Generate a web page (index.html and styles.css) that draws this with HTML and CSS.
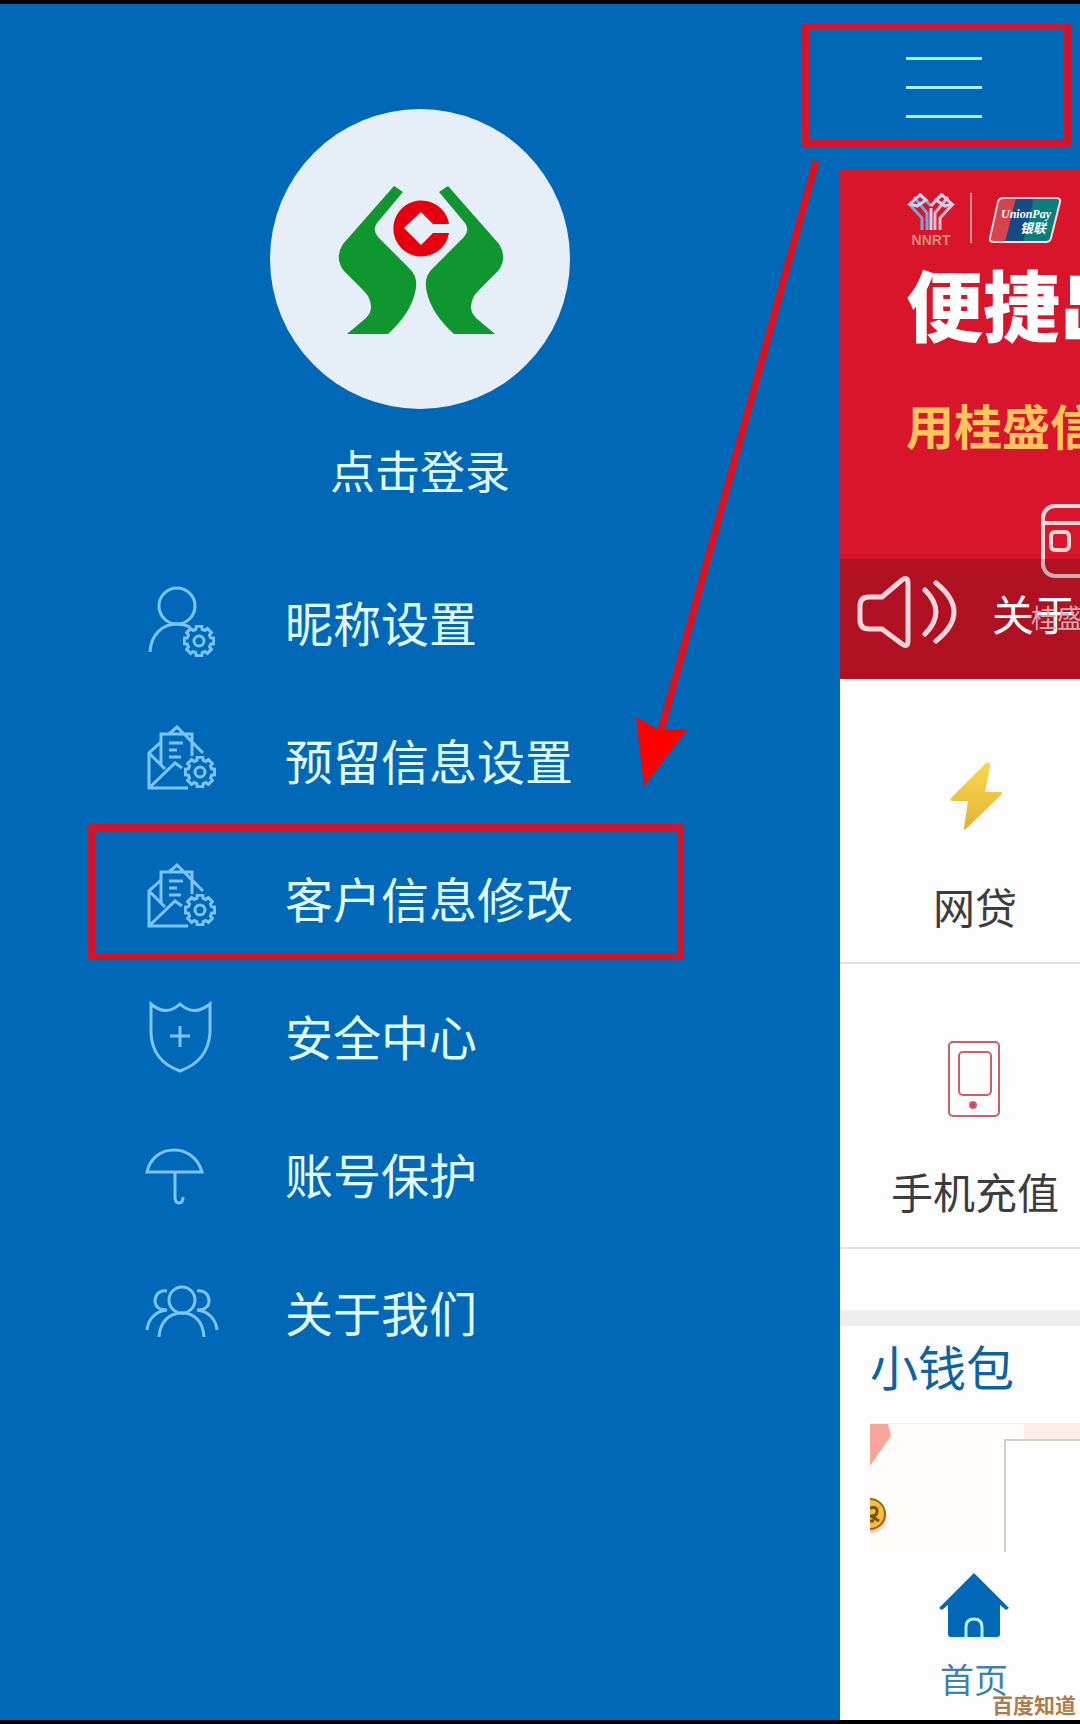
FILE: index.html
```html
<!DOCTYPE html>
<html lang="zh-CN">
<head>
    <meta charset="UTF-8">
    <meta name="viewport" content="width=device-width, initial-scale=1.0">
    <title>手机银行</title>
    <link rel="stylesheet" href="styles.css">
</head>
<body>

    <!-- Shared icon shapes -->
    <svg class="sprite" aria-hidden="true">
        <symbol id="gear" viewBox="-16 -16 32 32">
            <path d="M11.6-3.2 14.7-2.8V2.8L11.6 3.2 10.5 5.9 12.4 8.4 8.4 12.4 5.9 10.5 3.2 11.6 2.8 14.7H-2.8L-3.2 11.6-5.9 10.5-8.4 12.4-12.4 8.4-10.5 5.9-11.6 3.2-14.7 2.8V-2.8L-11.6-3.2-10.5-5.9-12.4-8.4-8.4-12.4-5.9-10.5-3.2-11.6-2.8-14.7H2.8L3.2-11.6 5.9-10.5 8.4-12.4 12.4-8.4 10.5-5.9Z"/>
            <circle r="5"/>
        </symbol>
        <symbol id="letter" viewBox="0 0 80 80">
            <path d="M21 18 9 29V64H48M9 29 25 45M9 64 35 39 42 44M21 42V10H52V32M29 10 37 3 63 29M29 19H43M29 26H37M29 33H41"/>
            <use href="#gear" x="44" y="32" width="32" height="32"/>
        </symbol>
    </svg>

    <div class="screen">
        <!-- Left side - Drawer menu -->
        <aside class="drawer">
            <button class="login">
                <svg class="avatar" viewBox="0 0 300 300">
                    <g fill="#10962e">
                        <path id="hand" d="M124 77 133 83 107 114Q102 121 108 128L140 160Q149 169 145 184 140 205 118 225H77L96 209Q105 200 98 187 96 184 91 179L74 162Q64 149 73 135Z"/>
                        <use href="#hand" transform="translate(302 0) scale(-1 1)"/>
                    </g>
                    <path fill="#e6000f" d="M179 115A28 28 0 1 0 179 124H163L151 136 134 119 151 103 163 115Z"/>
                </svg>
                <span>点击登录</span>
            </button>

            <nav class="menu">
                <a href="#nickname">
                    <svg viewBox="0 0 80 80">
                        <circle cx="37" cy="20" r="18"/>
                        <path d="M10 66C11 49 22 38 37 38Q44 38 50 41"/>
                        <use href="#gear" x="43" y="39" width="32" height="32"/>
                    </svg>
                    昵称设置
                </a>
                <a href="#reserved">
                    <svg viewBox="0 0 80 80"><use href="#letter"/></svg>
                    预留信息设置
                </a>
                <a href="#customer" class="marked">
                    <svg viewBox="0 0 80 80"><use href="#letter"/></svg>
                    客户信息修改
                </a>
                <a href="#security">
                    <svg viewBox="0 0 80 80">
                        <path d="M11 4Q26 17 40 4 54 17 70 4V33Q68 61 40 71 12 61 11 33ZM30 36H50M40 26V47"/>
                    </svg>
                    安全中心
                </a>
                <a href="#account">
                    <svg viewBox="0 0 80 80">
                        <path d="M7 34C10 20 21 12 34 12S58 20 62 34ZM35 34V59Q35 65 39 65 43 65 43 59"/>
                    </svg>
                    账号保护
                </a>
                <a href="#about">
                    <svg viewBox="0 0 80 80">
                        <circle cx="42" cy="24" r="13"/>
                        <path d="M19 61C20 46 29 37 42 37S63 46 64 61M27 15C19 14 15 19 15 25S20 34 27 34C16 35 8 43 7 54M57 15C65 14 69 19 69 25S64 34 57 34C68 35 76 43 77 54"/>
                    </svg>
                    关于我们
                </a>
            </nav>

            <svg class="arrow" viewBox="0 0 200 640">
                <path d="M176 12 20 585"/>
                <path class="arrow-head" d="M-4 568 19 581 47 581 4 637Z"/>
            </svg>
        </aside>

        <!-- Right side - Home page, pushed aside by the drawer -->
        <main class="home">
            <header class="topbar">
                <button class="menu-button" aria-label="菜单">
                    <span></span><span></span><span></span>
                </button>
            </header>

            <section class="banner">
                <div class="brands">
                    <svg class="metro" viewBox="0 0 50 58">
                        <g fill="none" stroke-width="3">
                            <path stroke="#7fa3d6" d="M3 13 16 27V39M8 6 21 22V39M14 3 25 15"/>
                            <path stroke="#f3b9cf" d="M47 13 34 27V39M42 6 29 22V39M36 3 25 15"/>
                            <path stroke="#c9d3ee" d="M25 17V39M4 13 14 4 20 9 11 15ZM46 13 36 4 30 9 39 15Z"/>
                        </g>
                        <text x="25" y="54">NNRT</text>
                    </svg>
                    <svg class="unionpay" viewBox="0 0 74 48">
                        <path fill="#d3444c" d="M12 2H30L19 46H5Q2 46 3 42Z"/>
                        <path fill="#164a86" d="M28 2H48L37 46H17Z"/>
                        <path fill="#0d7d7a" d="M46 2H69Q72 2 71 6L63 42Q62 46 58 46H35Z"/>
                        <path fill="none" stroke="#ffd9dc" stroke-width="2" d="M15 2H68Q73 2 72 6L63 42Q62 46 58 46H6Q1 46 2 42L10 6Q11 2 15 2Z"/>
                        <text x="38" y="22" class="union-en">UnionPay</text>
                        <text x="45" y="37" class="union-cn">银联</text>
                    </svg>
                </div>
                <h1>便捷出行</h1>
                <p class="slogan">用桂盛信用卡</p>
                <div class="wallet">
                    <svg viewBox="0 0 74 74">
                        <rect x="2" y="2" width="70" height="70" rx="12"/>
                        <path d="M2 19H72"/>
                        <rect x="10" y="28" width="18" height="18" rx="4"/>
                    </svg>
                    <span>桂盛</span>
                </div>
                <a class="notice" href="#notice">
                    <svg viewBox="0 0 100 72">
                        <path d="M3 30Q3 21 12 21H25L45 4Q51 0 51 7V65Q51 72 45 68L25 53H12Q3 53 3 44ZM68 14Q90 36 68 58M79 7Q115 36 79 65"/>
                    </svg>
                    关于
                </a>
            </section>

            <section class="services">
                <a href="#loan">
                    <svg viewBox="0 0 80 80">
                        <defs>
                            <linearGradient id="bolt" x2="0" y2="1">
                                <stop stop-color="#fbd84a"/>
                                <stop offset="1" stop-color="#e2b43a"/>
                            </linearGradient>
                        </defs>
                        <path fill="url(#bolt)" d="M50 9Q56 5 55 12L50 37H66Q68 37 66 40L31 74Q29 76 29 72L33 46H17Q14 46 17 42Z"/>
                    </svg>
                    网贷
                </a>
                <a href="#recharge">
                    <svg class="phone" viewBox="0 0 80 80">
                        <rect x="14" y="2" width="50" height="74" rx="4"/>
                        <rect x="24" y="12" width="32" height="43" rx="4"/>
                        <circle cx="38" cy="65" r="3"/>
                    </svg>
                    手机充值
                </a>
            </section>

            <section class="purse">
                <h2>小钱包</h2>
                <div class="purse-card">
                    <svg class="purse-art" viewBox="0 0 24 110">
                        <path fill="#f9a59b" d="M0 0H18L21 12 0 42Z"/>
                        <circle cx="1" cy="93" r="16" fill="#f3cdb0"/>
                        <circle cx="0" cy="90" r="15" fill="#f4bd3f" stroke="#94661c" stroke-width="2"/>
                        <path fill="none" stroke="#7a5210" stroke-width="3" d="M0 84Q8 82 7 88 7 92 1 92L9 97M0 97H4"/>
                    </svg>
                    <div class="purse-panel"></div>
                </div>
            </section>

            <nav class="tabs">
                <a href="#home">
                    <svg viewBox="0 0 72 68">
                        <path fill="#0068b7" d="M36 1 71 36 68 38 62 33V62Q62 65 59 65H13Q10 65 10 62V33L4 38 1 36Z"/>
                        <path fill="none" stroke="#b8f0ff" stroke-width="3" d="M28 65V55Q28 47 36 47T44 55V65"/>
                    </svg>
                    首页
                </a>
            </nav>
        </main>

        <div class="watermark">百度知道</div>
    </div>

</body>
</html>
```
FILE: styles.css
```css
*,
*::after {
    box-sizing: border-box;
    margin: 0;
    padding: 0;
}

body {
    font-family: "Noto Sans CJK SC", sans-serif;
    background-color: #000;
}

a {
    color: inherit;
    text-decoration: none;
}

button {
    font: inherit;
    color: inherit;
    background: none;
    border: none;
    cursor: pointer;
}

svg {
    display: block;
    flex-shrink: 0;
}

.sprite {
    position: absolute;
    width: 0;
    height: 0;
}

.screen {
    position: relative;
    display: grid;
    grid-template-columns: minmax(0, 7fr) minmax(0, 2fr);
    min-height: 100vh;
    border-top: 4px solid #000;
    border-bottom: 4px solid #000;
    overflow: hidden;
}

/* Left side - Drawer menu */
.drawer {
    position: relative;
    padding-top: 105px;
    background-color: #0068b7;
    color: #e0fbff;
}

.login {
    display: flex;
    flex-direction: column;
    align-items: center;
    gap: 31px;
    margin: 0 auto;
    font-size: 45px;
    line-height: 60px;
}

.avatar {
    width: 300px;
    height: 300px;
    border-radius: 50%;
    background-color: #e6eff8;
}

.menu {
    margin-top: 52px;
}

.menu a {
    position: relative;
    display: flex;
    align-items: center;
    gap: 65px;
    height: 138px;
    padding-left: 140px;
    font-size: 48px;
}

.menu svg {
    width: 80px;
    height: 80px;
    margin-top: 10px;
    fill: none;
    stroke: #7cc4fa;
    stroke-width: 3;
}

/* Red frames and arrow */
.marked::after,
.topbar::after {
    content: "";
    position: absolute;
    border: 7px solid #d4142a;
    border-radius: 3px;
}

.marked::after {
    top: -4px;
    bottom: 6px;
    left: 88px;
    width: 596px;
}

.arrow {
    position: absolute;
    top: 145px;
    right: 0;
    width: 200px;
    height: 640px;
    overflow: visible;
    fill: none;
    stroke: #dc1220;
    stroke-width: 7;
    pointer-events: none;
}

.arrow-head {
    fill: #f00;
    stroke: none;
}

/* Right side - Home page */
.home {
    position: relative;
    background-color: #fdfdfd;
}

.topbar {
    position: relative;
    height: 165px;
    padding: 53px 0 0 66px;
    background-color: #0068b7;
}

.topbar::after {
    top: 19px;
    right: 9px;
    left: -38px;
    height: 124px;
}

.menu-button {
    display: flex;
    flex-direction: column;
    gap: 26px;
    width: 76px;
}

.menu-button span {
    width: 100%;
    height: 3px;
    background-color: #a9f0fb;
}

.banner {
    position: relative;
    height: 510px;
    padding: 22px 0 0 66px;
    background-color: #d9152b;
    color: #fff;
    white-space: nowrap;
    overflow: hidden;
}

.brands {
    display: flex;
    align-items: center;
    background: linear-gradient(#ff8d96, #ff8d96) 64px 2px / 2px 50px no-repeat;
}

.metro {
    width: 50px;
    height: 58px;
}

.metro text {
    font: bold 14px "Liberation Sans", sans-serif;
    fill: #d98a7c;
    text-anchor: middle;
}

.unionpay {
    width: 74px;
    height: 48px;
    margin-left: 32px;
}

.union-en,
.union-cn {
    fill: #fff;
    text-anchor: middle;
    font: italic bold 12px "Liberation Serif", serif;
}

.union-cn {
    font: italic bold 13px "Noto Sans CJK SC", sans-serif;
}

.banner h1 {
    margin-top: 5px;
    font-size: 77px;
    font-weight: 900;
    line-height: 98px;
}

.slogan {
    margin-top: 42px;
    font-size: 48px;
    font-weight: 700;
    line-height: 60px;
    color: #ffc45e;
}

.wallet {
    margin: 50px 0 0 125px;
    font-size: 26px;
    line-height: 36px;
}

.wallet svg {
    width: 74px;
    height: 74px;
    margin-left: 10px;
    fill: none;
    stroke: #ffd6da;
    stroke-width: 4;
}

.wallet span {
    position: relative;
    z-index: 1;
    display: block;
    margin-top: 21px;
    color: #d9a9b2;
}

.notice {
    position: absolute;
    right: 0;
    bottom: 0;
    left: 0;
    display: flex;
    align-items: center;
    gap: 35px;
    height: 120px;
    padding: 0 0 14px 17px;
    background-color: rgba(0, 0, 0, 0.19);
    font-size: 42px;
}

.notice svg {
    width: 100px;
    height: 72px;
    fill: none;
    stroke: #ffd6da;
    stroke-width: 5;
    stroke-linecap: round;
}

/* Service tiles, only the first column is in view */
.services {
    height: 631px;
    overflow: hidden;
}

.services a {
    display: flex;
    flex-direction: column;
    align-items: center;
    gap: 41px;
    height: 285px;
    padding-top: 76px;
    width: 270px;
    border-bottom: 2px solid #e2e2e2;
    font-size: 42px;
    line-height: 60px;
    color: #3c3c3c;
}

.services svg {
    width: 80px;
    height: 80px;
}

.phone {
    fill: none;
    stroke: #c9606a;
    stroke-width: 2;
}

.phone circle {
    fill: #c9485a;
}

.purse {
    padding-left: 30px;
    border-top: 16px solid #eee;
}

.purse h2 {
    padding: 3px 0 22px;
    font-size: 48px;
    font-weight: 400;
    line-height: 72px;
    color: #0d62a0;
}

.purse-card {
    display: flex;
    justify-content: space-between;
    height: 129px;
    border-top: 1px solid #eee;
    background: linear-gradient(#ffebe8, #ffebe8) 154px 0 / 100% 15px no-repeat #fffdfa;
}

.purse-art {
    width: 24px;
    height: 110px;
}

.purse-panel {
    width: 76px;
    margin-top: 15px;
    border: solid #d2cfc8;
    border-width: 2px 0 0 2px;
    background-color: #fdfdfd;
}

.tabs {
    padding-top: 20px;
    overflow: hidden;
}

.tabs a {
    display: flex;
    flex-direction: column;
    align-items: center;
    gap: 14px;
    width: 268px;
    font-size: 34px;
    line-height: 50px;
    color: #3f80ad;
}

.tabs svg {
    width: 72px;
    height: 68px;
}

.watermark {
    position: absolute;
    right: 4px;
    bottom: 1px;
    font-size: 21px;
    font-weight: 700;
    line-height: 30px;
    color: #ab7d4c;
}
```
